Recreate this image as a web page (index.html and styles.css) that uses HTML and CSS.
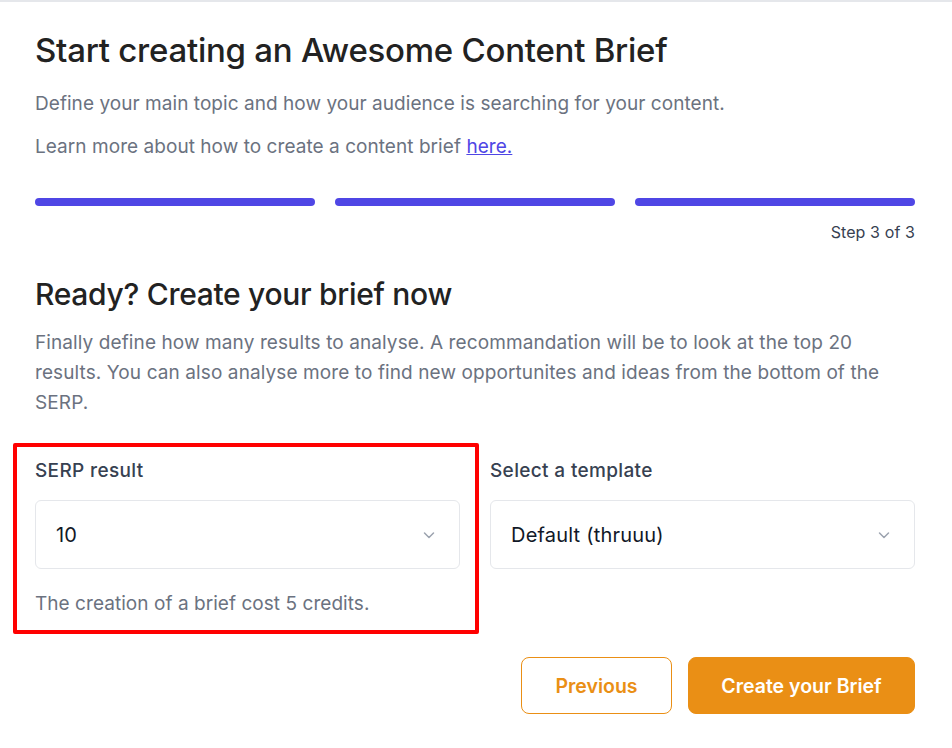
FILE: index.html
```html
<!DOCTYPE html>
<html lang="en">
<head>
  <meta charset="UTF-8" />
  <meta name="viewport" content="width=device-width, initial-scale=1.0"/>
  <title>Content Brief</title>
  <link rel="stylesheet" href="styles.css">
</head>
<body>
  <div class="page">
    <h1 class="title">Start creating an Awesome Content Brief</h1>
    <p class="lead">Define your main topic and how your audience is searching for your content.</p>
    <p class="lead">Learn more about how to create a content brief <a href="#">here.</a></p>

    <div class="steps">
      <span class="step done"></span>
      <span class="step done"></span>
      <span class="step done"></span>
    </div>
    <div class="step-count">Step 3 of 3</div>

    <h2 class="section-title">Ready? Create your brief now</h2>
    <p class="text">Finally define how many results to analyse. A recommandation will be to look at the top 20 results. You can also analyse more to find new opportunites and ideas from the bottom of the SERP.</p>

    <div class="fields">
      <div class="field highlighted">
        <label class="label">SERP result</label>
        <div class="select">
          <span>10</span>
          <svg width="16" height="16" viewBox="0 0 16 16" fill="none"><path d="M3.5 6l4.5 4.5L12.5 6" stroke="#9ca3af" stroke-width="1.5" stroke-linecap="round" stroke-linejoin="round"/></svg>
        </div>
        <p class="hint">The creation of a brief cost 5 credits.</p>
      </div>
      <div class="field">
        <label class="label">Select a template</label>
        <div class="select">
          <span>Default (thruuu)</span>
          <svg width="16" height="16" viewBox="0 0 16 16" fill="none"><path d="M3.5 6l4.5 4.5L12.5 6" stroke="#9ca3af" stroke-width="1.5" stroke-linecap="round" stroke-linejoin="round"/></svg>
        </div>
      </div>
    </div>

    <div class="actions">
      <button class="btn btn-outline">Previous</button>
      <button class="btn btn-primary">Create your Brief</button>
    </div>
  </div>
</body>
</html>
```

FILE: styles.css
```css
body {
  margin: 0;
  font-family: Inter, "Noto Sans", sans-serif;
  background-color: #fff;
  color: #222;
  border-top: 2px solid #e5e7eb;
}
.page {
  width: 880px;
  padding: 28px 35px 0;
}
.title {
  font-size: 33px;
  font-weight: 500;
  letter-spacing: -0.25px;
  margin: 0 0 19px;
  color: #222;
  line-height: 40px;
}
.lead {
  font-size: 19px;
  letter-spacing: 0.05px;
  color: #6b7280;
  margin: 0 0 13px;
  line-height: 30px;
}
.lead a {
  color: #4f46e5;
}
.steps {
  display: flex;
  gap: 20px;
  margin-top: 36px;
}
.step {
  flex: 1;
  height: 8px;
  border-radius: 4px;
  background-color: #e5e7eb;
}
.step.done {
  background-color: #4f46e5;
}
.step-count {
  text-align: right;
  font-size: 16px;
  letter-spacing: 0.1px;
  color: #374151;
  margin-top: 15px;
  line-height: 22px;
}
.section-title {
  font-size: 30px;
  font-weight: 500;
  letter-spacing: -0.3px;
  margin: 32px 0 15px;
  line-height: 38px;
  color: #222;
}
.text {
  font-size: 19px;
  letter-spacing: 0.1px;
  line-height: 30px;
  color: #6b7280;
  margin: 0;
}
.fields {
  display: grid;
  grid-template-columns: 1fr 1fr;
  gap: 30px;
  margin-top: 41px;
}
.field {
  position: relative;
}
.field.highlighted::after {
  content: "";
  position: absolute;
  left: -22px;
  top: -16px;
  width: 458px;
  height: 183px;
  border: 4px solid #ff0000;
  border-radius: 2px;
}
.label {
  display: block;
  font-size: 19px;
  font-weight: 500;
  letter-spacing: 0.35px;
  color: #374151;
  line-height: 24px;
}
.select {
  box-sizing: border-box;
  display: flex;
  align-items: center;
  justify-content: space-between;
  height: 69px;
  margin-top: 17px;
  padding: 0 22px 0 20px;
  border: 1px solid #e5e7eb;
  border-radius: 6px;
  font-size: 20px;
  letter-spacing: 0.2px;
  color: #111827;
}
.hint {
  font-size: 19px;
  letter-spacing: 0.05px;
  color: #6b7280;
  margin: 22px 0 0;
  line-height: 26px;
}
.actions {
  display: flex;
  justify-content: flex-end;
  gap: 16px;
  margin-top: 40px;
}
.btn {
  font-family: inherit;
  font-size: 19.5px;
  font-weight: 600;
  height: 57px;
  border-radius: 8px;
  cursor: pointer;
}
.btn-outline {
  width: 151px;
  background: #fff;
  color: #ea8f15;
  border: 1px solid #ea8f15;
}
.btn-primary {
  width: 227px;
  background: #ea8f15;
  color: #fff;
  border: 1px solid #ea8f15;
}
```
